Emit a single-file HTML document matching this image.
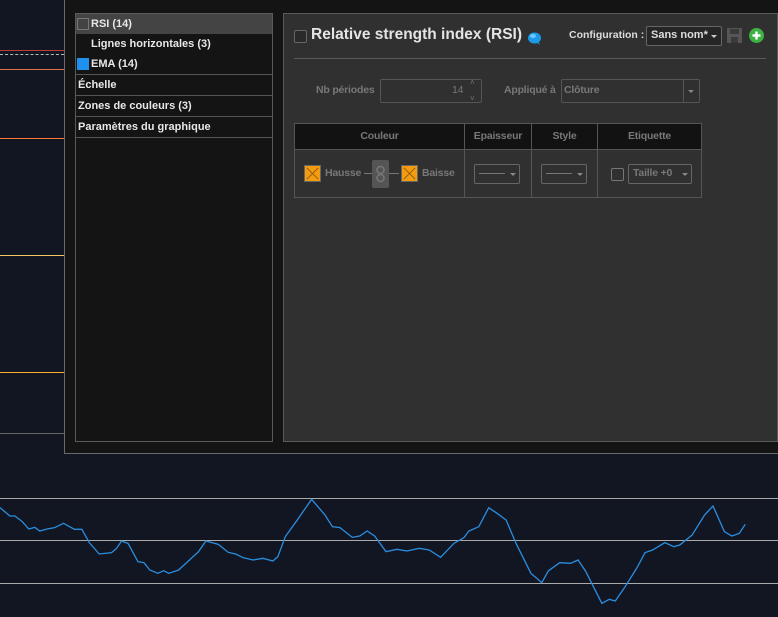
<!DOCTYPE html>
<html><head><meta charset="utf-8"><style>
*{margin:0;padding:0;box-sizing:border-box}
body{width:778px;height:617px;background:#121622;position:relative;overflow:hidden;font-family:"Liberation Sans","DejaVu Sans",sans-serif;font-size:12px;color:#e8e8e8}
.a{position:absolute}
.hl{position:absolute;left:0;width:64px;height:1px}
.item{position:absolute;left:0;width:196px;height:21px;line-height:20px;font-weight:bold;font-size:11px;padding-left:2px}
.sep{border-top:1px solid #555}
.g{color:#787878;font-weight:bold;font-size:10.5px;letter-spacing:-0.2px}
.box{position:absolute;border:1px solid #555;border-radius:2px}
.arr{position:absolute;width:0;height:0;border-left:3px solid transparent;border-right:3px solid transparent;border-top:3px solid #888}
.sw{position:absolute;width:17px;height:17px;background:#f49c10;border:1px solid #666}
</style></head><body>
<div class="hl" style="top:50px;background:#c23a3a"></div>
<div class="hl" style="top:54px;height:0;border-top:1px dashed #bbb"></div>
<div class="hl" style="top:69px;background:#e0704a"></div>
<div class="hl" style="top:138px;background:#ff7a3a"></div>
<div class="hl" style="top:255px;background:#f2c462"></div>
<div class="hl" style="top:372px;background:#ffae2a"></div>
<div class="hl" style="top:433px;background:#666"></div>

<div class="a" style="left:64px;top:-1px;width:720px;height:455px;background:#141414;border:1px solid #6a6a6a"></div>

<div class="a" style="left:75px;top:13px;width:198px;height:429px;background:#141414;border:1px solid #5a5a5a">
 <div class="item" style="top:0;background:#444;height:20px"><span class="a" style="left:1px;top:4px;width:12px;height:12px;border:1px solid #777"></span><span style="padding-left:13px">RSI (14)</span></div>
 <div class="item" style="top:20px;padding-left:15px">Lignes horizontales (3)</div>
 <div class="item" style="top:40px"><span class="a" style="left:1px;top:4px;width:12px;height:12px;background:#1e90f0"></span><span style="padding-left:13px">EMA (14)</span></div>
 <div class="item sep" style="top:60px">Échelle</div>
 <div class="item sep" style="top:81px">Zones de couleurs (3)</div>
 <div class="item sep" style="top:102px">Paramètres du graphique</div>
 <div class="a sep" style="top:123px;left:0;width:196px"></div>
</div>

<div class="a" style="left:283px;top:13px;width:495px;height:429px;background:#303030;border:1px solid #5a5a5a"></div>
<div class="box" style="left:294px;top:30px;width:13px;height:13px;border-color:#666;background:#2a2a2a"></div>
<div class="a" style="left:311px;top:26px;font-size:15.5px;font-weight:bold;color:#e4e4e4">Relative strength index (RSI)</div>
<svg class="a" style="left:527px;top:31px" width="16" height="15"><ellipse cx="7.5" cy="7" rx="6.5" ry="5.5" fill="#1e9be8"/><path d="M9 11 L13 14 L11 10z" fill="#1e9be8"/><ellipse cx="6" cy="5" rx="3" ry="2" fill="#6cc8ff"/></svg>
<div class="a" style="left:569px;top:29px;font-weight:bold;font-size:10.5px;color:#ddd">Configuration :</div>
<div class="box" style="left:646px;top:26px;width:76px;height:20px;border-color:#666;background:#262626"></div>
<div class="a" style="left:651px;top:29px;font-size:11px;font-weight:bold;color:#ddd">Sans nom*</div>
<div class="arr" style="left:711px;top:35px;border-top-color:#ccc"></div>
<svg class="a" style="left:727px;top:28px" width="15" height="15"><rect x="0" y="0" width="15" height="15" rx="1" fill="#555"/><rect x="3" y="1" width="9" height="5" fill="#3a3a3a"/><rect x="4" y="9" width="7" height="6" fill="#3a3a3a"/></svg>
<svg class="a" style="left:749px;top:28px" width="15" height="15"><circle cx="7.5" cy="7.5" r="7.5" fill="#3cb043"/><path d="M7.5 3.5V11.5M3.5 7.5H11.5" stroke="#fff" stroke-width="2.4"/></svg>
<div class="a" style="left:294px;top:58px;width:472px;height:1px;background:#5a5a5a"></div>

<div class="a g" style="left:316px;top:84px">Nb périodes</div>
<div class="box" style="left:380px;top:79px;width:102px;height:24px;border-color:#555"></div>
<div class="a g" style="left:452px;top:84px;font-weight:normal">14</div>
<div class="a" style="left:470px;top:79px;color:#777;font-size:8px;line-height:8px">˄<br><br>˅</div>
<div class="a g" style="left:504px;top:84px">Appliqué à</div>
<div class="box" style="left:561px;top:79px;width:139px;height:24px;border-color:#555"></div>
<div class="a" style="left:683px;top:80px;width:1px;height:22px;background:#555"></div>
<div class="arr" style="left:688px;top:90px"></div>
<div class="a g" style="left:564px;top:84px">Clôture</div>

<div class="a" style="left:294px;top:123px;width:408px;height:75px;border:1px solid #555"></div>
<div class="a" style="left:295px;top:124px;width:406px;height:26px;background:#121212;border-bottom:1px solid #555"></div>
<div class="a" style="left:464px;top:124px;width:1px;height:73px;background:#555"></div>
<div class="a" style="left:531px;top:124px;width:1px;height:73px;background:#555"></div>
<div class="a" style="left:597px;top:124px;width:1px;height:73px;background:#555"></div>
<div class="a g" style="left:295px;top:130px;width:169px;text-align:center">Couleur</div>
<div class="a g" style="left:465px;top:130px;width:66px;text-align:center">Epaisseur</div>
<div class="a g" style="left:532px;top:130px;width:65px;text-align:center">Style</div>
<div class="a g" style="left:598px;top:130px;width:103px;text-align:center">Etiquette</div>

<svg class="a sw" style="left:304px;top:165px" viewBox="0 0 17 17"><path d="M2 2L15 15M15 2L2 15" stroke="#8a5a10" stroke-width="1"/></svg>
<div class="a g" style="left:325px;top:167px">Hausse</div>
<div class="a" style="left:364px;top:173px;width:8px;height:1px;background:#777"></div>
<div class="a" style="left:372px;top:160px;width:17px;height:28px;background:#555;border-radius:2px"></div>
<svg class="a" style="left:374px;top:163px" width="13" height="22"><circle cx="6.5" cy="7" r="3.5" fill="none" stroke="#777" stroke-width="1.5"/><circle cx="6.5" cy="15" r="3.5" fill="none" stroke="#777" stroke-width="1.5"/></svg>
<div class="a" style="left:389px;top:173px;width:10px;height:1px;background:#777"></div>
<svg class="a sw" style="left:401px;top:165px" viewBox="0 0 17 17"><path d="M2 2L15 15M15 2L2 15" stroke="#8a5a10" stroke-width="1"/></svg>
<div class="a g" style="left:422px;top:167px">Baisse</div>

<div class="box" style="left:474px;top:164px;width:46px;height:20px;border-color:#666"></div>
<div class="a" style="left:479px;top:173px;width:26px;height:1px;background:#777"></div>
<div class="arr" style="left:510px;top:173px"></div>
<div class="box" style="left:541px;top:164px;width:46px;height:20px;border-color:#666"></div>
<div class="a" style="left:546px;top:173px;width:26px;height:1px;background:#777"></div>
<div class="arr" style="left:577px;top:173px"></div>
<div class="box" style="left:611px;top:168px;width:13px;height:13px;border-color:#777"></div>
<div class="box" style="left:628px;top:164px;width:64px;height:20px;border-color:#666"></div>
<div class="a g" style="left:633px;top:167px">Taille +0</div>
<div class="arr" style="left:682px;top:173px"></div>

<div class="a" style="left:0;top:498px;width:778px;height:1px;background:#aaa"></div>
<div class="a" style="left:0;top:540px;width:778px;height:1px;background:#aaa"></div>
<div class="a" style="left:0;top:583px;width:778px;height:1px;background:#aaa"></div>
<svg class="a" style="left:0;top:430px" width="778" height="187" viewBox="0 0 1568 561" preserveAspectRatio="none"><polyline fill="none" stroke="#2a8ee0" stroke-width="1.3" vector-effect="non-scaling-stroke" points="0,233 20,258 30,258 45,275 58,297 70,292 80,303 95,297 110,293 128,280 150,298 165,298 180,338 200,372 225,368 235,355 245,333 258,340 278,395 290,398 302,420 318,430 330,422 340,430 360,420 400,365 415,333 440,343 460,367 475,372 490,383 510,390 530,385 550,393 560,380 575,320 600,268 628,208 655,255 670,290 685,293 710,322 725,318 740,303 755,318 778,365 800,358 820,363 845,355 865,360 888,382 915,340 935,323 945,303 965,290 985,233 1000,248 1020,270 1040,340 1070,430 1092,458 1105,423 1128,398 1150,400 1165,390 1180,423 1213,520 1228,508 1240,513 1260,470 1285,410 1300,368 1315,360 1340,338 1358,350 1370,345 1395,315 1420,255 1437,228 1460,305 1475,318 1490,310 1502,283"/></svg>
</body></html>
